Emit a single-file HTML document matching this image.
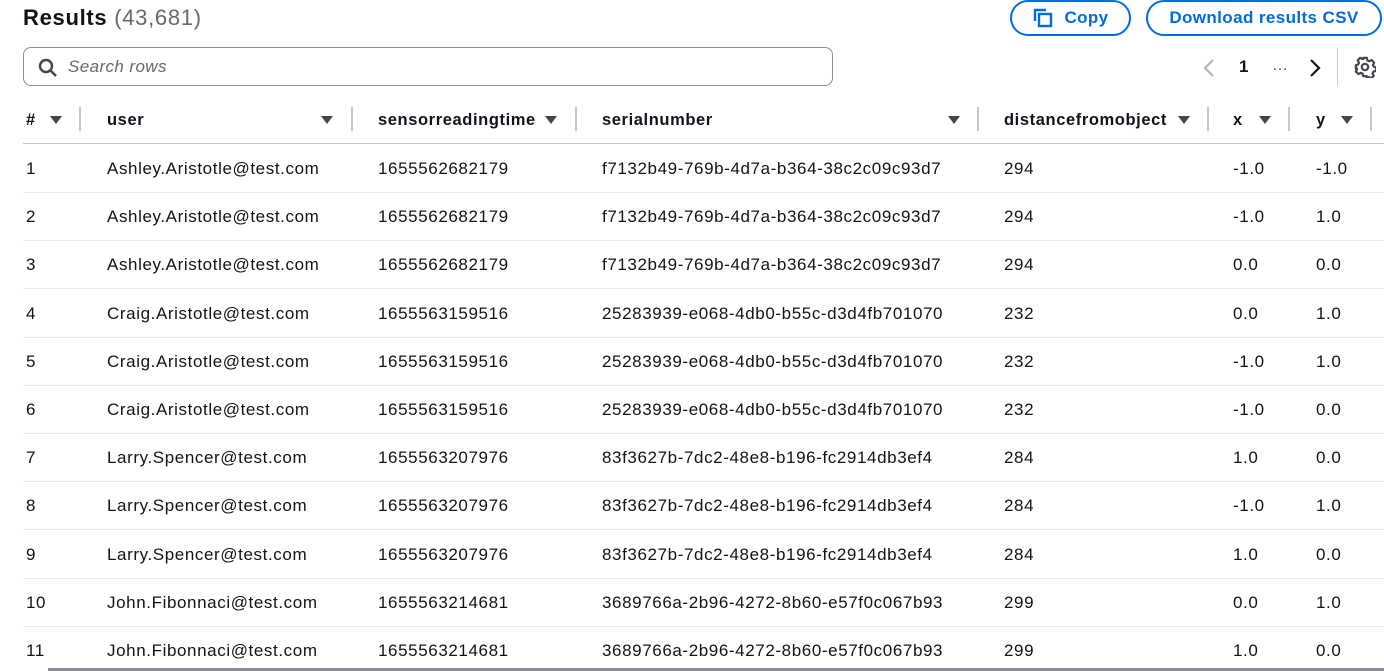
<!DOCTYPE html>
<html><head><meta charset="utf-8"><style>
*{margin:0;padding:0;box-sizing:border-box}
body{width:1384px;height:671px;overflow:hidden;background:#fff;font-family:"Liberation Sans",Arial,sans-serif;color:#0f141a;position:relative}
.a{position:absolute;white-space:nowrap}
h1{position:absolute;left:23px;top:5px;font-size:22px;font-weight:bold;color:#0f141a;letter-spacing:0.7px}
h1 span{font-weight:normal;color:#656871}
.btn{position:absolute;top:0;height:36px;border:2px solid #006ce0;border-radius:18px;color:#006ce0;font-weight:bold;font-size:17px;display:flex;align-items:center;justify-content:center;letter-spacing:0.4px}
.search{position:absolute;left:23px;top:47px;width:810px;height:39px;border:1px solid #8c8c94;border-radius:8px}
.th{position:absolute;top:111px;font-weight:bold;font-size:16.5px;color:#0f141a;letter-spacing:0.6px}
.tri{position:absolute;top:116px;width:0;height:0;border-left:6px solid transparent;border-right:6px solid transparent;border-top:8px solid #424650}
.div{position:absolute;top:107px;width:2px;height:24px;background:#c6c6cd}
.hl{position:absolute;left:23px;right:0;height:1px;background:#c6c6cd}
.rl{position:absolute;left:23px;right:0;height:1px;background:#e9ebed}
.c{position:absolute;font-size:17px;color:#0f141a;white-space:nowrap;letter-spacing:0.6px}
</style></head><body>
<h1>Results <span>(43,681)</span></h1>
<div class="btn" style="left:1010px;width:121px"><svg width="22" height="22" viewBox="0 0 22 22" style="margin-right:10px"><path d="M3 14V3h11" fill="none" stroke="#006ce0" stroke-width="2.4"/><rect x="7" y="7" width="12" height="12" fill="none" stroke="#006ce0" stroke-width="2.4"/></svg>Copy</div>
<div class="btn" style="left:1146px;width:236px">Download results CSV</div>
<div class="search"><svg class="a" style="left:14px;top:10px" width="20" height="20" viewBox="0 0 20 20"><circle cx="8" cy="8" r="6" fill="none" stroke="#424650" stroke-width="2.4"/><path d="M12.5 12.5L18 18" stroke="#424650" stroke-width="2.6"/></svg><span class="a" style="left:44px;top:9px;font-style:italic;font-size:17px;color:#656871;letter-spacing:0.4px">Search rows</span></div>
<svg class="a" style="left:1202px;top:58px" width="14" height="20"><path d="M11 2L3 10l8 8" fill="none" stroke="#b4b4bb" stroke-width="2.2"/></svg>
<span class="a" style="left:1239px;top:57px;font-weight:bold;font-size:17px">1</span>
<span class="a" style="left:1272px;top:57px;font-size:16px;color:#424650">…</span>
<svg class="a" style="left:1308px;top:58px" width="14" height="20"><path d="M3 2l8 8-8 8" fill="none" stroke="#0f141a" stroke-width="2.2"/></svg>
<div class="a" style="left:1337px;top:48px;width:1px;height:38px;background:#c6c6cd"></div>
<svg class="a" style="left:1354px;top:56px" width="22" height="22" viewBox="0 0 24 24"><path d="M10 2h4l.6 2.8 2 1 2.6-1.4 2.8 2.8-1.4 2.6 1 2 2.4.6v4l-2.8.6-1 2 1.4 2.6-2.8 2.8-2.6-1.4-2 1L14 22h-4l-.6-2.6-2-1-2.6 1.4-2.8-2.8 1.4-2.6-1-2L2 14v-4l2.4-.6 1-2L4 4.8 6.8 2l2.6 1.4 2-1z" fill="none" stroke="#424650" stroke-width="2.4" stroke-linejoin="round"/><circle cx="12" cy="12" r="3.5" fill="none" stroke="#424650" stroke-width="2.4"/></svg>

<div class="th" style="left:26px">#</div><div class="tri" style="left:50px"></div><div class="div" style="left:79px"></div>
<div class="th" style="left:107px">user</div><div class="tri" style="left:321px"></div><div class="div" style="left:351px"></div>
<div class="th" style="left:378px">sensorreadingtime</div><div class="tri" style="left:545px"></div><div class="div" style="left:575px"></div>
<div class="th" style="left:602px">serialnumber</div><div class="tri" style="left:948px"></div><div class="div" style="left:977px"></div>
<div class="th" style="left:1004px">distancefromobject</div><div class="tri" style="left:1178px"></div><div class="div" style="left:1207px"></div>
<div class="th" style="left:1233px">x</div><div class="tri" style="left:1259px"></div><div class="div" style="left:1288px"></div>
<div class="th" style="left:1316px">y</div><div class="tri" style="left:1341px"></div><div class="div" style="left:1370px"></div>
<div class="hl" style="top:143px"></div>

<div id="rows"></div>
<div class="a" style="left:48px;top:668px;width:1336px;height:3px;background:#8c8c94"></div>
<script>
var d=[
["Ashley.Aristotle@test.com","1655562682179","f7132b49-769b-4d7a-b364-38c2c09c93d7","294","-1.0","-1.0"],
["Ashley.Aristotle@test.com","1655562682179","f7132b49-769b-4d7a-b364-38c2c09c93d7","294","-1.0","1.0"],
["Ashley.Aristotle@test.com","1655562682179","f7132b49-769b-4d7a-b364-38c2c09c93d7","294","0.0","0.0"],
["Craig.Aristotle@test.com","1655563159516","25283939-e068-4db0-b55c-d3d4fb701070","232","0.0","1.0"],
["Craig.Aristotle@test.com","1655563159516","25283939-e068-4db0-b55c-d3d4fb701070","232","-1.0","1.0"],
["Craig.Aristotle@test.com","1655563159516","25283939-e068-4db0-b55c-d3d4fb701070","232","-1.0","0.0"],
["Larry.Spencer@test.com","1655563207976","83f3627b-7dc2-48e8-b196-fc2914db3ef4","284","1.0","0.0"],
["Larry.Spencer@test.com","1655563207976","83f3627b-7dc2-48e8-b196-fc2914db3ef4","284","-1.0","1.0"],
["Larry.Spencer@test.com","1655563207976","83f3627b-7dc2-48e8-b196-fc2914db3ef4","284","1.0","0.0"],
["John.Fibonnaci@test.com","1655563214681","3689766a-2b96-4272-8b60-e57f0c067b93","299","0.0","1.0"],
["John.Fibonnaci@test.com","1655563214681","3689766a-2b96-4272-8b60-e57f0c067b93","299","1.0","0.0"]];
var xs=[107,378,602,1004,1233,1316],h="";
d.forEach(function(r,i){var t=159+i*48.2;h+='<div class="c" style="left:26px;top:'+t+'px">'+(i+1)+'</div>';
r.forEach(function(v,j){h+='<div class="c" style="left:'+xs[j]+'px;top:'+t+'px">'+v+'</div>'});
if(i<10)h+='<div class="rl" style="top:'+(192+i*48.2)+'px"></div>';});
document.getElementById("rows").innerHTML=h;
</script>
</body></html>
